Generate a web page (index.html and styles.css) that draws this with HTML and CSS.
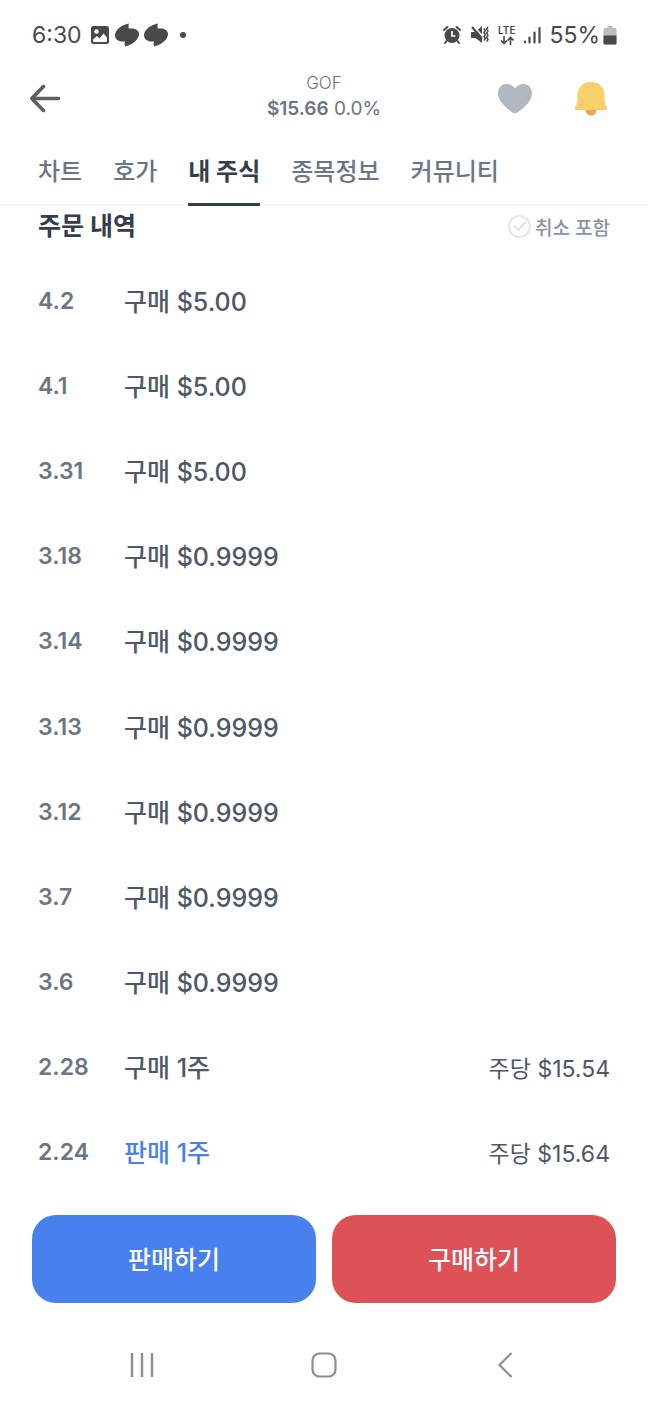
FILE: index.html
```html
<!DOCTYPE html>
<html lang="ko">
<head>
  <meta charset="UTF-8" />
  <meta name="viewport" content="width=device-width, initial-scale=1">
  <title>GOF</title>
  <link rel="stylesheet" href="styles.css">
</head>
<body>

<!-- Status bar -->
<div class="status">
  <div class="status-left">
    <span class="clock">6:30</span>
    <svg width="20" height="20" viewBox="0 0 20 20">
      <rect x="1" y="1" width="18" height="18" rx="2.5" fill="#4a4a4a"/>
      <circle cx="6.5" cy="6.5" r="2.2" fill="#fefefe"/>
      <path d="M3 14.5l4-3.5 2.5 2.5 4-5 3.500 4V16a1 1 0 0 1-1 1H4a1 1 0 0 1-1-1z" fill="#fefefe"/>
    </svg>
    <svg width="24" height="24" viewBox="0 0 24 24"><path d="M14 .5C6 2 0 7 0 12.500c0 4 4 6.500 10 6-.8 2-.5 3.500.5 5C18 21.500 24 16 24 11c0-4-4-6-10-5.500-.8-1.500-.7-3.500 0-5z" fill="#4a4a4a"/></svg>
    <svg width="24" height="24" viewBox="0 0 24 24"><path d="M14 .5C6 2 0 7 0 12.500c0 4 4 6.500 10 6-.8 2-.5 3.500.5 5C18 21.500 24 16 24 11c0-4-4-6-10-5.500-.8-1.500-.7-3.500 0-5z" fill="#4a4a4a"/></svg>
    <span class="dot"></span>
  </div>
  <div class="status-right">
    <svg width="20" height="20" viewBox="0 0 20 20">
      <circle cx="10" cy="10.500" r="7.500" fill="#4a4a4a"/>
      <path d="M2 5l3.500-3M18 5l-3.500-3M4.500 16L3 18M15.500 16l1.500 2" stroke="#4a4a4a" stroke-width="2" stroke-linecap="round"/>
      <path d="M10 6v5h3.500" fill="none" stroke="#fefefe" stroke-width="1.700"/>
    </svg>
    <svg width="20" height="20" viewBox="0 0 20 20" fill="none" stroke="#4a4a4a">
      <path d="M1 7h4.500L12 1v17l-6.500-5H1z" fill="#4a4a4a" stroke="none"/>
      <path d="M3 0l11 13" stroke="#fefefe" stroke-width="1.500"/>
      <path d="M2 2l10 12" stroke-width="2"/>
      <path d="M14 3.500l1.300 2-1.300 2 1.300 2-1.300 2 1.300 2-1.300 2M18 2l-1.300 2L18 6l-1.300 2.200L18 10.500l-1.300 2 1.300 2-1.300 2" stroke-width="1.500"/>
    </svg>
    <span class="lte">
      <span>LTE</span>
      <svg width="14" height="9" viewBox="0 0 14 9" fill="none" stroke="#4a4a4a" stroke-width="1.600">
        <path d="M4 0v7M1 4.500l3 3 3-3M10.500 9V2M7.500 4.500l3-3 3 3"/>
      </svg>
    </span>
    <svg width="18" height="18" viewBox="0 0 18 18" fill="none" stroke="#4a4a4a" stroke-width="2.200" stroke-linecap="round">
      <path d="M2 15.500v1M6.500 11.500v5M11.500 6.500v10M16.500 2v14.500"/>
    </svg>
    <span class="battery">55%
      <svg width="14" height="20" viewBox="0 0 14 20">
        <path d="M4.500 1h5v2H12a1.500 1.500 0 0 1 1.500 1.500V18a1.500 1.500 0 0 1-1.500 1.500H2A1.500 1.500 0 0 1 .5 18V4.500A1.500 1.500 0 0 1 2 3h2.500z" fill="#bdbdbd"/>
        <path d="M.5 10.500h13V18a1.500 1.500 0 0 1-1.500 1.500H2A1.500 1.500 0 0 1 .5 18z" fill="#4a4a4a"/>
      </svg>
    </span>
  </div>
</div>

<header class="header">
  <button class="icon-btn" aria-label="뒤로">
    <svg width="32" height="30" viewBox="0 0 32 30" fill="none" stroke="#5f5f5f" stroke-width="3.600" stroke-linecap="round" stroke-linejoin="round">
      <path d="M13.500 2.500L1.800 14.500l11.700 12M2.500 14.500h26"/>
    </svg>
  </button>
  <div class="stock">
    <h1 class="ticker">GOF</h1>
    <p class="price"><strong>$15.66</strong> 0.0%</p>
  </div>
  <div class="actions">
    <button class="icon-btn" aria-label="관심">
      <svg width="36" height="32" viewBox="0 0 36 32">
        <path d="M18 5.500C20 2.500 23 1 26.500 1 31.500 1 35 5 35 10c0 8-7.500 14.500-14.500 19.500q-2.500 1.500-5 0C8.500 24.500 1 18 1 10 1 5 4.500 1 9.500 1 13 1 16 2.500 18 5.500z" fill="#b0b8c0"/>
      </svg>
    </button>
    <button class="icon-btn" aria-label="알림">
      <svg width="34" height="36" viewBox="0 0 34 36">
        <path d="M11.500 28h11c0 4-2 6.500-5.500 6.500S11.500 32 11.500 28z" fill="#e9a84c"/>
        <path d="M17 1C8.500 1 3.500 7 3.500 14.500c0 6 0 8.500-2.500 12-.8 1.500-.5 2.500 1 2.500h30c1.500 0 1.800-1 1-2.500-2.500-3.500-2.500-6-2.500-12C30.500 7 25.500 1 17 1z" fill="#f7cf6b"/>
      </svg>
    </button>
  </div>
</header>

<nav class="tabs">
  <a href="#chart">차트</a>
  <a href="#quote">호가</a>
  <a href="#mine" class="active">내 주식</a>
  <a href="#info">종목정보</a>
  <a href="#community">커뮤니티</a>
</nav>

<main class="orders">
  <div class="orders-head">
    <h2>주문 내역</h2>
    <label class="include"><input type="checkbox"> 취소 포함</label>
  </div>

  <ul class="order-list">
    <li><span class="date">4.2</span><span class="what">구매 $5.00</span></li>
    <li><span class="date">4.1</span><span class="what">구매 $5.00</span></li>
    <li><span class="date">3.31</span><span class="what">구매 $5.00</span></li>
    <li><span class="date">3.18</span><span class="what">구매 $0.9999</span></li>
    <li><span class="date">3.14</span><span class="what">구매 $0.9999</span></li>
    <li><span class="date">3.13</span><span class="what">구매 $0.9999</span></li>
    <li><span class="date">3.12</span><span class="what">구매 $0.9999</span></li>
    <li><span class="date">3.7</span><span class="what">구매 $0.9999</span></li>
    <li><span class="date">3.6</span><span class="what">구매 $0.9999</span></li>
    <li><span class="date">2.28</span><span class="what">구매 1주</span><span class="each">주당 $15.54</span></li>
    <li><span class="date">2.24</span><span class="what sell">판매 1주</span><span class="each">주당 $15.64</span></li>
  </ul>
</main>

<div class="trade">
  <button class="trade-btn trade-sell">판매하기</button>
  <button class="trade-btn trade-buy">구매하기</button>
</div>

<!-- Android navigation -->
<div class="sysnav">
  <button class="icon-btn" aria-label="최근 앱">
    <svg width="28" height="28" viewBox="0 0 28 28" stroke="#8e8e8e" stroke-width="2.400"><path d="M4 2v24M14 2v24M24 2v24"/></svg>
  </button>
  <button class="icon-btn" aria-label="홈">
    <svg width="28" height="28" viewBox="0 0 28 28" fill="none" stroke="#8e8e8e" stroke-width="2.200"><rect x="2.500" y="2.500" width="23" height="23" rx="7"/></svg>
  </button>
  <button class="icon-btn" aria-label="이전">
    <svg width="28" height="28" viewBox="0 0 28 28" fill="none" stroke="#8e8e8e" stroke-width="2.200"><path d="M19.500 2L7.500 14l12 12"/></svg>
  </button>
</div>

</body>
</html>
```

FILE: styles.css
```css
* {
  margin: 0;
  padding: 0;
  box-sizing: border-box;
}

body {
  font-family: Inter, "Noto Sans CJK KR", sans-serif;
  background-color: #fefefe;
  color: #4e5866;
  min-height: 100vh;
  display: flex;
  flex-direction: column;
}

button {
  font-family: inherit;
  border: none;
  cursor: pointer;
}

svg {
  display: block;
  flex-shrink: 0;
}

.icon-btn {
  background: none;
}

/* Status bar */
.status {
  display: flex;
  justify-content: space-between;
  align-items: center;
  height: 70px;
  padding: 0 31px 0 32px;
  color: #4a4a4a;
  font-size: 23px;
}

.status-left,
.status-right {
  display: flex;
  align-items: center;
}

.status-left {
  gap: 5px;
}

.status-right {
  gap: 8px;
}

.clock {
  margin-right: 3px;
}

.dot {
  width: 6px;
  height: 6px;
  margin-left: 7px;
  border-radius: 50%;
  background-color: #4a4a4a;
}

.lte {
  display: flex;
  flex-direction: column;
  align-items: center;
  font-size: 10px;
  font-weight: 600;
  line-height: 11px;
}

.battery {
  display: flex;
  align-items: center;
  gap: 3px;
}

/* Header */
.header {
  display: grid;
  grid-template-columns: 1fr auto 1fr;
  align-items: center;
  height: 54px;
  padding: 0 30px;
}

.header > .icon-btn {
  justify-self: start;
}

.stock {
  padding-bottom: 6px;
  text-align: center;
  color: #6b7684;
}

.ticker {
  font-size: 17px;
  font-weight: 300;
  line-height: 26px;
}

.price {
  font-size: 19px;
  line-height: 26px;
}

.price strong {
  font-weight: 600;
}

.actions {
  display: flex;
  align-items: center;
  justify-content: flex-end;
  gap: 41px;
  padding-right: 10px;
}

/* Tabs */
.tabs {
  display: flex;
  gap: 31px;
  height: 82px;
  padding: 0 38px;
  border-bottom: 2px solid #f4f5f6;
}

.tabs a {
  height: 82px;
  line-height: 95px;
  font-size: 24px;
  font-weight: 500;
  color: #6b7684;
  text-decoration: none;
  white-space: nowrap;
}

.tabs .active {
  color: #333d4b;
  font-weight: 700;
  border-bottom: 3px solid #333d4b;
}

/* Orders */
.orders {
  flex: 1;
  display: flex;
  flex-direction: column;
  padding: 0 38px;
}

.orders-head {
  display: flex;
  justify-content: space-between;
  align-items: center;
  height: 52px;
  padding-bottom: 12px;
}

.orders-head h2 {
  font-size: 25px;
  font-weight: 700;
  line-height: 36px;
  color: #333d4b;
}

.include {
  display: flex;
  align-items: center;
  gap: 4px;
  font-size: 19px;
  font-weight: 500;
  color: #8b95a1;
}

.include input {
  appearance: none;
  display: grid;
  place-items: center;
  width: 23px;
  height: 23px;
  border: 2px solid #e5e8eb;
  border-radius: 50%;
}

.include input::before {
  content: "";
  width: 10px;
  height: 5px;
  margin-bottom: 3px;
  border: solid #dfe2e6;
  border-width: 0 0 2px 2px;
  transform: rotate(-45deg);
}

.order-list {
  flex: 1;
  display: flex;
  flex-direction: column;
  list-style: none;
}

.order-list li {
  flex: 1;
  display: flex;
  align-items: center;
  min-height: 64px;
}

.date {
  width: 86px;
  font-size: 23px;
  font-weight: 600;
  color: #6b7684;
}

.what {
  padding-bottom: 2px;
  font-size: 25px;
  font-weight: 500;
}

.sell {
  color: #4880ee;
}

.each {
  margin-left: auto;
  font-size: 23px;
  font-weight: 400;
}

/* Trade buttons */
.trade {
  display: grid;
  grid-template-columns: 1fr 1fr;
  gap: 16px;
  padding: 20px 32px 24px;
}

.trade-btn {
  height: 88px;
  padding-bottom: 2px;
  border-radius: 24px;
  color: #fff;
  font-size: 25px;
  font-weight: 500;
}

.trade-sell {
  background-color: #4880ee;
}

.trade-buy {
  background-color: #dd5257;
}

.sysnav {
  display: flex;
  justify-content: space-between;
  align-items: center;
  height: 77px;
  padding: 0 128px 2px;
}
```
